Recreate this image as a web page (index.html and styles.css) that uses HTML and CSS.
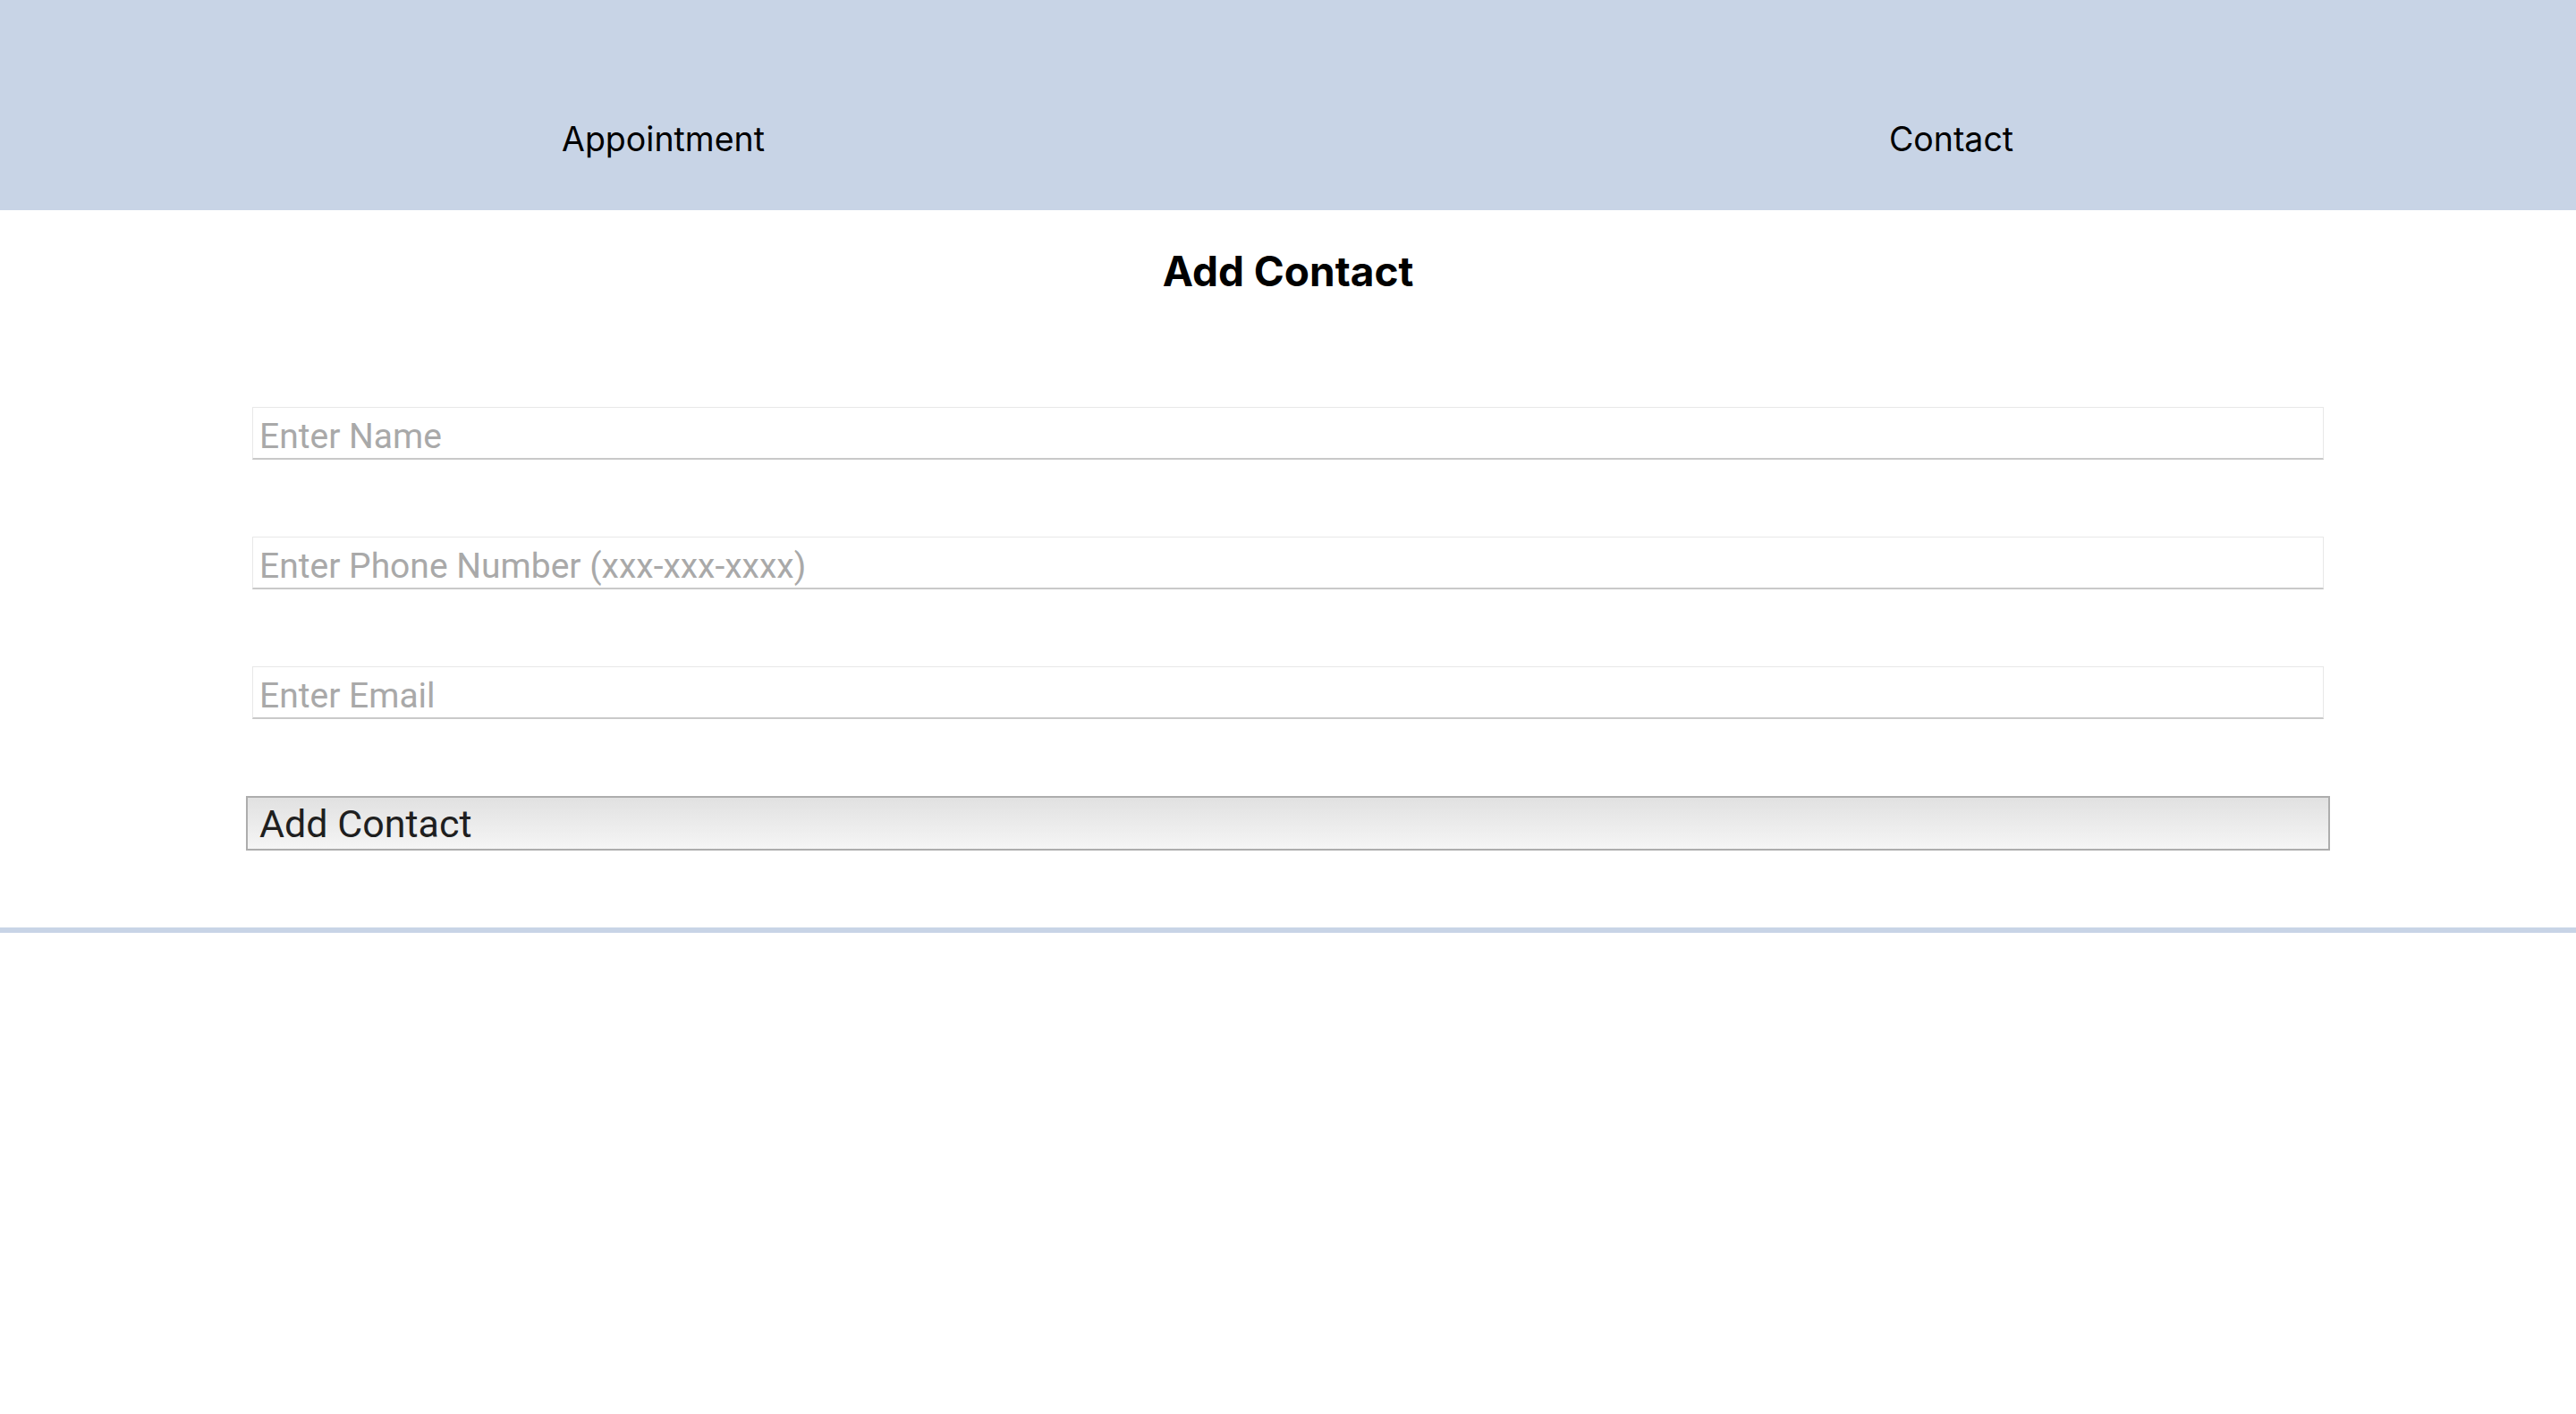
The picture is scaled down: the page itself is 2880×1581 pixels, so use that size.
FILE: index.html
```html
<!DOCTYPE html>
<html lang="en">
<head>
<meta charset="utf-8">
<title>Add Contact</title>
<link rel="stylesheet" href="styles.css">
</head>
<body>
<header class="topbar">
  <nav class="nav">
    <a class="nav-item" href="#">Appointment</a>
    <a class="nav-item" href="#">Contact</a>
  </nav>
</header>
<main class="content">
  <h1 class="title">Add Contact</h1>
  <form class="form">
    <input class="field" type="text" placeholder="Enter Name">
    <input class="field" type="text" placeholder="Enter Phone Number (xxx-xxx-xxxx)">
    <input class="field" type="text" placeholder="Enter Email">
    <button class="submit" type="button">Add Contact</button>
  </form>
</main>
<footer class="footer"></footer>
</body>
</html>
```

FILE: styles.css
```css
html, body {
  margin: 0;
  padding: 0;
  background: #ffffff;
}

body {
  font-family: "Inter", "Roboto", sans-serif;
  color: #000;
}

.topbar {
  background: #c8d4e6;
  height: 235px;
  box-sizing: border-box;
  padding-top: 137px;
}

.nav {
  display: flex;
}

.nav-item {
  flex: 1;
  padding-left: 43px;
  text-align: center;
  font-family: "Inter", sans-serif;
  font-size: 37.5px;
  line-height: 37px;
  color: #000;
  text-decoration: none;
}

.content {
  display: flex;
  flex-direction: column;
  align-items: center;
}

.title {
  margin: 45px 0 129px;
  font-family: "Inter", sans-serif;
  font-weight: 700;
  font-size: 46px;
  line-height: 46px;
  color: #000;
}

.form {
  width: 2330px;
  display: flex;
  flex-direction: column;
  gap: 86px;
}

.field {
  box-sizing: border-box;
  width: calc(100% - 14px);
  margin: 0 7px;
  height: 59px;
  padding: 8px 7px 0;
  border: 1px solid #e8e8e8;
  border-bottom: 2px solid #c9c9c9;
  border-radius: 0;
  background: #fff;
  font-family: "Roboto", sans-serif;
  font-size: 39px;
  color: #222;
  outline: none;
}

.field::placeholder {
  color: #a9a9a9;
}

.submit {
  box-sizing: border-box;
  width: 100%;
  height: 61px;
  padding: 0 13px;
  border: 2px solid #adadad;
  border-radius: 0;
  background: linear-gradient(to bottom, #e1e1e1, #f5f5f5);
  font-family: "Roboto", sans-serif;
  font-size: 43px;
  color: #1f1f1f;
  text-align: left;
}

.footer {
  margin-top: 86px;
  height: 6px;
  background: #c8d4e6;
  box-shadow: 0 2px 0 #eef1f7;
}
```
